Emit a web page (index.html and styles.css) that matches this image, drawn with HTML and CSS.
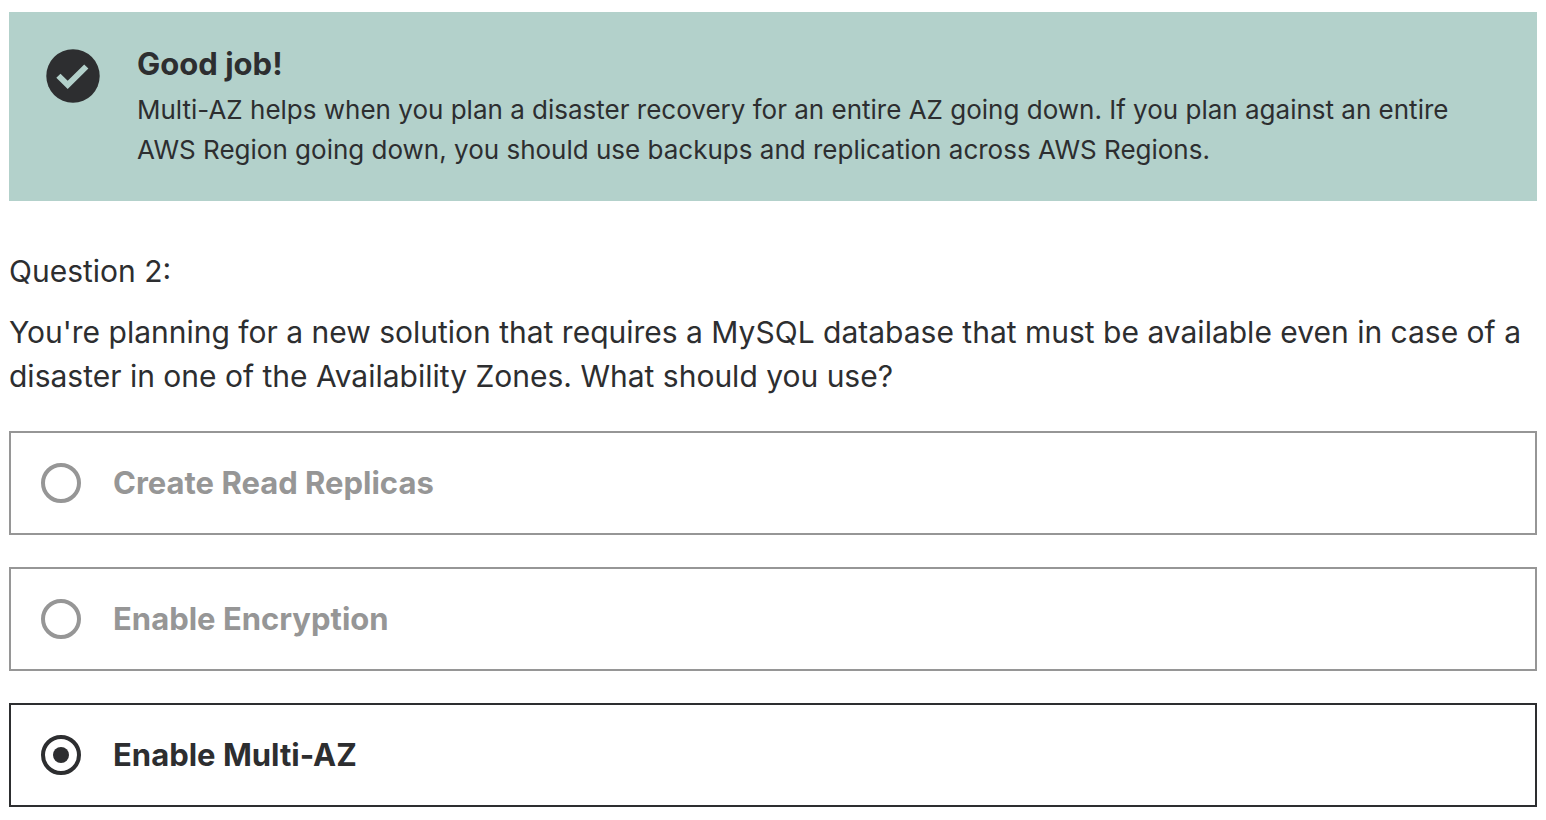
FILE: index.html
```html
<!DOCTYPE html>
<html lang="en">
<head>
<meta charset="utf-8">
<title>Quiz</title>
<link rel="stylesheet" href="styles.css">
</head>
<body>
<main class="quiz">
  <section class="feedback">
    <svg class="feedback-icon" viewBox="0 0 54 54" aria-hidden="true">
      <circle cx="27" cy="27" r="26.7" fill="#2d2e30"/>
      <path d="M10.3 28.7 14.5 24.7 21.7 31.8 38.2 15.6 42.4 19.6 21.7 40Z" fill="#b3d1cb"/>
    </svg>
    <div class="feedback-body">
      <h2 class="feedback-title">Good job!</h2>
      <p class="feedback-text">Multi-AZ helps when you plan a disaster recovery for an entire AZ going down. If you plan against an entire AWS Region going down, you should use backups and replication across AWS Regions.</p>
    </div>
  </section>
  <form class="question">
    <p class="question-number">Question 2:</p>
    <p class="question-text" id="prompt">You're planning for a new solution that requires a MySQL database that must be available even in case of a disaster in one of the Availability Zones. What should you use?</p>
    <div class="options" role="radiogroup" aria-labelledby="prompt">
      <label class="option"><input class="radio" type="radio" name="answer"><span>Create Read Replicas</span></label>
      <label class="option"><input class="radio" type="radio" name="answer"><span>Enable Encryption</span></label>
      <label class="option"><input class="radio" type="radio" name="answer" checked><span>Enable Multi-AZ</span></label>
    </div>
  </form>
</main>
</body>
</html>
```
FILE: styles.css
```css
* { box-sizing: border-box; }
body { margin: 0; background: #fff; color: #2d2e30; font-family: Inter, "Liberation Sans", sans-serif; }
h2, p { margin: 0; }
.quiz { padding: 12px 9px 13px; }
.feedback { display: flex; gap: 37px; padding: 32px 37px 31px; background: #b3d1cb; }
.feedback-icon { flex: none; width: 54px; height: 54px; margin-top: 5px; }
.feedback-title { font-size: 31px; line-height: 40px; font-weight: 700; }
.feedback-text { margin-top: 6px; font-size: 26px; line-height: 40px; }
.question { margin-top: 48px; }
.question-number { font-size: 30px; line-height: 44px; }
.question-text { margin-top: 17px; font-size: 30px; line-height: 44px; }
.options { display: grid; gap: 32px; margin-top: 33px; }
.option { display: flex; align-items: center; gap: 32px; padding: 30px; border: 2px solid #969696; color: #969696; font-size: 31px; line-height: 40px; font-weight: 700; }
.option:has(:checked) { border-color: #2d2e30; color: #2d2e30; }
.radio { appearance: none; flex: none; display: grid; place-items: center; width: 40px; height: 40px; margin: 0; border: 4px solid currentColor; border-radius: 50%; color: inherit; }
.radio:checked::before { content: ""; width: 16px; height: 16px; border-radius: 50%; background: currentColor; }
```
